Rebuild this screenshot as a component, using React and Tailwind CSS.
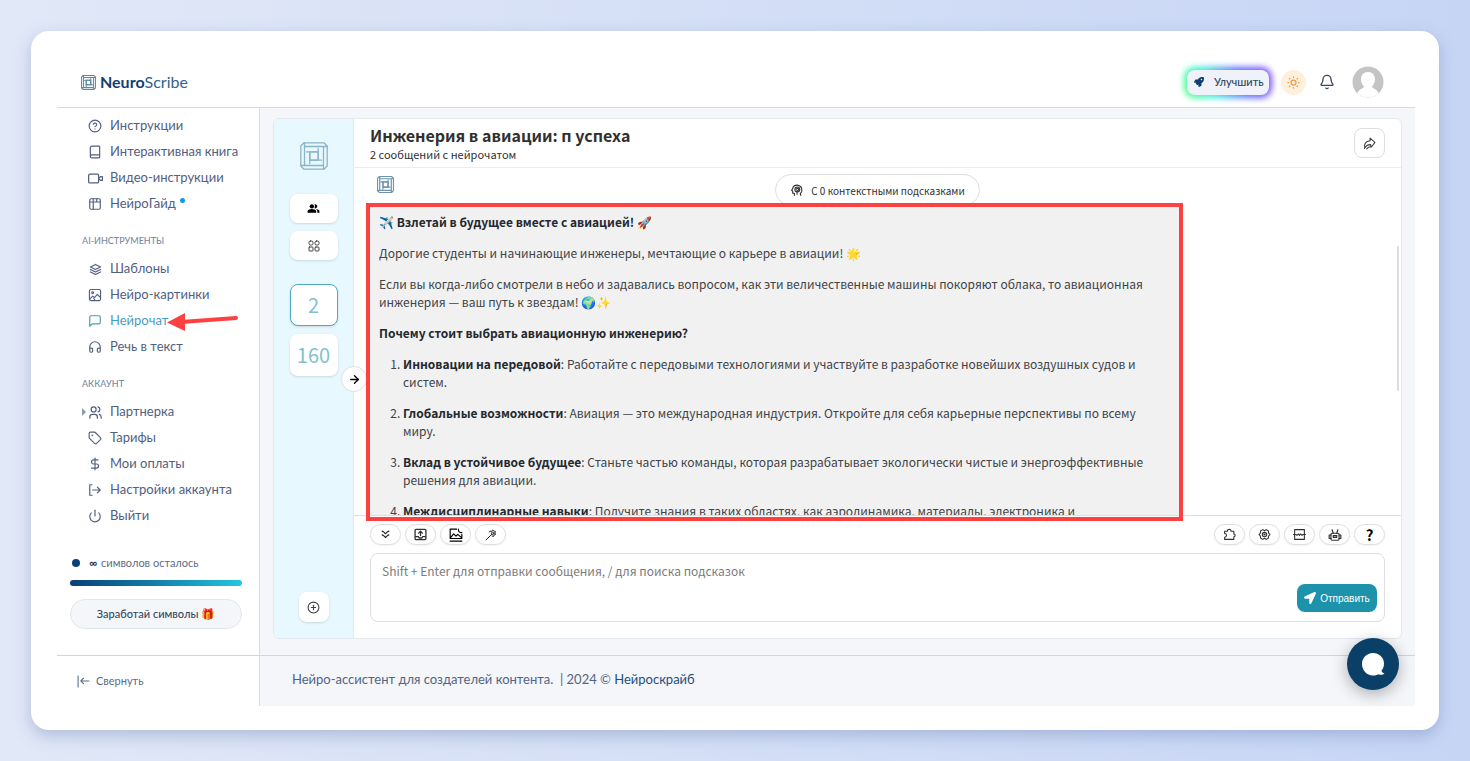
import React from "react";
import { CircleHelp, Book, Headphones, Tag, DollarSign, Power, Bell, CirclePlus, ArrowRight } from "lucide-react";
import { FaRocket, FaLocationArrow } from "react-icons/fa";
import { MdPeopleAlt } from "react-icons/md";
import { TbStack2, TbUsers, TbSun } from "react-icons/tb";

const Svg = ({ size = 14, box = 24, width = 2, className = "", children }) => (
  <svg
    width={size}
    height={size}
    viewBox={`0 0 ${box} ${box}`}
    fill="none"
    stroke="currentColor"
    strokeWidth={width}
    strokeLinecap="round"
    strokeLinejoin="round"
    className={`shrink-0 ${className}`}
    aria-hidden="true"
  >
    {children}
  </svg>
);

const LogoMark = ({ size, className = "", width = 1.3 }) => (
  <Svg size={size} box={28} width={width} className={className}>
    <path d="M4 .8h20l3.200 3.200v20L24 27.200H4L.8 24V4z" />
    <rect x="9.800" y="9.800" width="8.400" height="8.400" />
    {[0, 90, 180, 270].map((r) => (
      <path key={r} transform={`rotate(${r} 14 14)`} d="M4.500 4.500H27M6.500 9.800H18" />
    ))}
  </Svg>
);

const VideoIcon = () => (
  <Svg size={15}>
    <rect x="1" y="5" width="16" height="14" rx="2" />
    <path d="M17 12l3-3h3v6h-3z" />
  </Svg>
);
const TableIcon = () => (
  <Svg>
    <rect x="3" y="3" width="18" height="18" rx="2" />
    <path d="M3 8.500h18M9 3v18M15 3v5" />
  </Svg>
);
const PictureIcon = () => (
  <Svg>
    <rect x="2.500" y="2.500" width="19" height="19" rx="2.500" />
    <circle cx="8" cy="8" r="1.500" />
    <path d="M3 19l5-5 3 2.500 5-5.500 5 5M12 21l-2-3" />
  </Svg>
);
const BubbleIcon = () => (
  <Svg>
    <path d="M3 21V5a2 2 0 0 1 2-2h14a2 2 0 0 1 2 2v10a2 2 0 0 1-2 2H7z" />
  </Svg>
);
const SignOutIcon = () => (
  <Svg>
    <path d="M7 3H3v18h4M8 12h12M16 7l5 5-5 5" />
  </Svg>
);
const CollapseIcon = () => (
  <Svg size={13}>
    <path d="M2 2v20M7 11h15M12 6l-5 5 5 5" />
  </Svg>
);
const GridIcon = () => (
  <Svg size={12} width={2}>
    <rect x="2" y="2" width="8" height="8" rx="3" />
    <rect x="14" y="2" width="8" height="8" rx="3" />
    <rect x="2" y="14" width="8" height="8" rx="1" />
    <rect x="14" y="14" width="8" height="8" rx="2" />
  </Svg>
);
const HeadIcon = () => (
  <Svg size={13}>
    <path d="M8 21v-4H5v-4l-2-1 2-4c1-4 4-6 8-6 5 0 9 4 9 9 0 3-1 5-3 7l1 3" />
    <circle cx="13.500" cy="10" r="4.500" />
    <path d="M13 15v4M11 10l2-2 3 1-1 3-3 1" />
  </Svg>
);
const ShareIcon = () => (
  <Svg size={13}>
    <path d="M13 2l9 8-7 9-1-5c-5 0-9 2-11 7C1 13 5 8 13 7z" />
    <path d="M7 22c2-3 4-4 7-4" />
  </Svg>
);
const DownIcon = () => (
  <Svg size={9} width={3}>
    <path d="M3 3l4 2 5 5 5-5 4-2M3 13l4 2 5 5 5-5 4-2" />
  </Svg>
);
const UploadIcon = () => (
  <Svg size={13} width={2.4}>
    <rect x="2" y="2.500" width="20" height="19" rx="2" />
    <path d="M3 16h5l1.500 2.500h5L16 16h5M12 14V6M8.500 9.500L12 6l3.500 3.500" />
  </Svg>
);
const ImageIcon = () => (
  <Svg size={14} width={2} className="text-black">
    <path d="M13 2H2v16h20v-7M2 22.500h20M3 16l5-6 4 4 3-3 6 5" />
    <path d="M16 2c0 4 2 6 6 6" />
  </Svg>
);
const WandIcon = () => (
  <Svg size={12}>
    <path d="M2 22L14 10M9 6l1-2 3 1 2-3 3 2 3 1-1 3 1 3-3 1-1 3-3-1" />
    <circle cx="15.500" cy="8.500" r="2.500" />
  </Svg>
);
const PuzzleIcon = () => (
  <Svg size={13}>
    <path d="M3 6h5a3.500 3.500 0 0 1 7 0h5v5a2.500 2.500 0 0 1 0 5v5H3v-4a3 3 0 0 0 0-7z" />
  </Svg>
);
const GearIcon = () => (
  <Svg size={13}>
    <path d="M9 3l3 2 3-2 4 2 .5 4L22 12l-2.500 3-.5 4-4 2-3-2-3 2-4-2-.5-4L2 12l2.500-3L5 5z" />
    <circle cx="12" cy="12" r="4" />
    <circle cx="12" cy="12" r="1" />
  </Svg>
);
const BreakIcon = () => (
  <Svg size={13}>
    <path d="M3 9V3h18v6M3 15v6h18v-6M3 3v18M21 3v18" />
    <path d="M1 12h4l2.500 1.500L10 11l2 2.500 2-2.500 2.500 2.500L19 12h4" />
  </Svg>
);
const RobotIcon = () => (
  <Svg size={14}>
    <rect x="5" y="9" width="14" height="12" rx="2" />
    <path d="M9 9L7 3M15 9l2-6M5 12H2v6h3M19 12h3v6h-3M9 13h6v3H9z" />
  </Svg>
);

const guides = [
  { label: "Инструкции", icon: <CircleHelp size={14} /> },
  { label: "Интерактивная книга", icon: <Book size={14} /> },
  { label: "Видео-инструкции", icon: <VideoIcon /> },
  { label: "НейроГайд", icon: <TableIcon />, dot: true },
];
const tools = [
  { label: "Шаблоны", icon: <TbStack2 size={15} /> },
  { label: "Нейро-картинки", icon: <PictureIcon /> },
  { label: "Нейрочат", icon: <BubbleIcon />, active: true },
  { label: "Речь в текст", icon: <Headphones size={14} /> },
];
const account = [
  { label: "Партнерка", icon: <TbUsers size={15} />, caret: true },
  { label: "Тарифы", icon: <Tag size={14} /> },
  { label: "Мои оплаты", icon: <DollarSign size={14} /> },
  { label: "Настройки аккаунта", icon: <SignOutIcon /> },
  { label: "Выйти", icon: <Power size={14} /> },
];

const Pointer = () => (
  <svg className="pointer-events-none absolute left-[110px] top-0 z-10" width="72" height="26" viewBox="0 0 72 26" aria-hidden="true">
    <path d="M14 14L69 10" stroke="#fd4141" strokeWidth="4" strokeLinecap="round" />
    <path d="M0 14.500L18 5v18z" fill="#fd4141" />
  </svg>
);

const NavList = ({ items }) => (
  <ul>
    {items.map((it) => (
      <li key={it.label} className="relative">
        <a
          href="#"
          className={`flex h-[26px] items-center pl-[31px] text-[13px] ${it.active ? "text-[#4a9cbd]" : "text-[#526080]"}`}
        >
          {it.caret && (
            <span className="absolute left-[25px] h-0 w-0 border-y-4 border-l-4 border-y-transparent border-l-[#8d97b3]" />
          )}
          <span className="flex w-[22px] shrink-0 items-center">{it.icon}</span>
          {it.label}
          {it.dot && <span className="mb-2 ml-1 h-[5px] w-[5px] rounded-full bg-[#1296ea]" />}
        </a>
        {it.active && <Pointer />}
      </li>
    ))}
  </ul>
);

const NavHeading = ({ children }) => (
  <h2 className="flex h-[39px] items-center pl-[25px] pt-[9px] text-[9px] font-medium uppercase text-[#7c8aa3]">{children}</h2>
);

const Tool = ({ label, children }) => (
  <button
    type="button"
    aria-label={label}
    className="flex h-[21px] w-[31px] items-center justify-center rounded-full border border-[#dedede] bg-white text-[#303030] shadow-xs"
  >
    {children}
  </button>
);

const points = [
  ["Инновации на передовой", ": Работайте с передовыми технологиями и участвуйте в разработке новейших воздушных судов и систем."],
  ["Глобальные возможности", ": Авиация — это международная индустрия. Откройте для себя карьерные перспективы по всему миру."],
  ["Вклад в устойчивое будущее", ": Станьте частью команды, которая разрабатывает экологически чистые и энергоэффективные решения для авиации."],
  ["Междисциплинарные навыки", ": Получите знания в таких областях, как аэродинамика, материалы, электроника и программирование."],
];

function TopBar() {
  return (
    <header className="flex h-[51px] items-center justify-between border-b border-[#d5dae6] pl-[24px] pr-[31px]">
      <a href="#" className="flex items-center gap-1 text-[16px] text-[#2f628c]">
        <LogoMark size={15} width={2} className="text-[#5d88a4]" />
        <span>
          <b className="font-bold text-[#123f70]">Neuro</b>Scribe
        </span>
      </a>
      <div className="flex items-center gap-3">
        <div className="relative">
          <div className="absolute -inset-[3px] rounded-[11px] bg-[linear-gradient(65deg,#4dff8a_5%,#36f0d8_30%,#5b6cff_65%,#8a4dff)] blur-[3px]" />
          <button type="button" className="relative flex h-[25px] w-[82px] items-center gap-[10px] rounded-lg bg-[#eff2f8] pl-[7px] text-[11px] font-medium text-[#2c4765]">
            <FaRocket size={10} className="text-[#0f3f70]" />
            Улучшить
          </button>
        </div>
        <button type="button" aria-label="Тема" className="flex h-[25px] w-[25px] items-center justify-center rounded-full bg-[#fff0dc] text-[#f09a4a]">
          <TbSun size={15} />
        </button>
        <button type="button" aria-label="Уведомления" className="flex w-[18px] justify-center text-[#39475e]">
          <Bell size={16} />
        </button>
        <button type="button" aria-label="Профиль" className="ml-1">
          <svg width="32" height="32" viewBox="0 0 32 32" aria-hidden="true">
            <circle cx="16" cy="16" r="15.500" fill="#c4c4c4" />
            <path d="M16 6c4.500 0 7 3 7 7.500 0 3-1.500 5.500-3 7 0 2 5 2 6.500 7A15.500 15.500 0 0 1 5.500 27.500c1.500-5 6.500-5 6.500-7-1.500-1.500-3-4-3-7C9 9 11.500 6 16 6z" fill="#fff" />
          </svg>
        </button>
      </div>
    </header>
  );
}

function Sidebar() {
  return (
    <aside className="flex w-[203px] shrink-0 flex-col border-r border-[#d8dce9] bg-white">
      <nav className="flex-1 pt-[5px]">
        <NavList items={guides} />
        <NavHeading>AI-инструменты</NavHeading>
        <NavList items={tools} />
        <NavHeading>Аккаунт</NavHeading>
        <NavList items={account} />
        <div className="pl-[13px] pr-[17px] pt-6">
          <p className="flex h-5 items-center text-[11px] text-[#5d6b86]">
            <span className="ml-[2px] mr-[9px] h-2 w-2 rounded-full bg-[#0a4076]" />
            <b className="mr-1 text-[#303a52]">∞</b>символов осталось
          </p>
          <div className="mt-[7px] h-[6px] rounded-sm bg-gradient-to-r from-[#0a4076] to-[#25c5e0]" />
          <button type="button" className="mt-[13px] h-[30px] w-full rounded-full border border-[#e1e5ee] bg-[#f5f6fa] text-[11px] font-medium text-[#364a63]">
            Заработай символы 🎁
          </button>
        </div>
      </nav>
      <button type="button" className="flex h-[51px] items-center gap-[6px] border-t border-[#d0d4e2] pl-5 text-[11px] text-[#5d6b86]">
        <CollapseIcon />
        Свернуть
      </button>
    </aside>
  );
}

function ChatRail() {
  const tile = "flex w-12 items-center justify-center rounded-lg bg-white shadow-sm";
  return (
    <div className="relative flex w-20 shrink-0 flex-col items-center border-r border-[#dcebf2] bg-[#e7f8ff] pb-4 pt-[23px]">
      <LogoMark size={28} className="text-[#8db3c8]" />
      <button type="button" aria-label="Маски" className={`${tile} mt-6 h-[29px] text-black`}>
        <MdPeopleAlt size={13} />
      </button>
      <button type="button" aria-label="Плагины" className={`${tile} mt-2 h-[29px] text-[#404040]`}>
        <GridIcon />
      </button>
      <button type="button" className={`${tile} mt-6 h-[42px] border border-[#4dabba] text-[20px] text-[#80c2ce]`}>2</button>
      <button type="button" className={`${tile} mt-2 h-[42px] text-[20px] text-[#80c2ce]`}>160</button>
      <button type="button" aria-label="Новый чат" className="mt-auto flex h-[30px] w-[30px] items-center justify-center rounded-lg bg-white text-[#404040] shadow-sm">
        <CirclePlus size={13} />
      </button>
      <button type="button" aria-label="Развернуть" className="absolute -right-[14px] top-[247px] z-10 flex h-[26px] w-[26px] items-center justify-center rounded-full border border-[#e0e0e0] bg-white text-black">
        <ArrowRight size={13} strokeWidth={2.5} />
      </button>
    </div>
  );
}

function Message() {
  return (
    <article className="w-4/5 bg-[#f1f1f1] px-[9px] pt-[7px] text-[12px] leading-[18px] text-[#404348]">
      <div className="flex flex-col gap-[13px]">
        <p className="font-bold text-[#24292f]">✈️ Взлетай в будущее вместе с авиацией! 🚀</p>
        <p>Дорогие студенты и начинающие инженеры, мечтающие о карьере в авиации! 🌟</p>
        <p>
          Если вы когда-либо смотрели в небо и задавались вопросом, как эти величественные машины покоряют облака, то авиационная
          инженерия — ваш путь к звездам! 🌍✨
        </p>
        <p className="font-bold text-[#24292f]">Почему стоит выбрать авиационную инженерию?</p>
        <ol className="flex list-decimal flex-col gap-[13px] pl-6 pr-6">
          {points.map(([head, text]) => (
            <li key={head}>
              <b className="font-bold text-[#24292f]">{head}</b>
              {text}
            </li>
          ))}
        </ol>
      </div>
    </article>
  );
}

function ChatPanel() {
  return (
    <section className="flex h-[521px] overflow-hidden rounded-md border border-[#e4e8ef] bg-white font-['Noto_Sans_CJK_SC','Noto_Sans',sans-serif] text-[#303030]">
      <ChatRail />
      <div className="relative flex min-w-0 flex-1 flex-col">
        <header className="flex h-[49px] shrink-0 items-center justify-between border-b border-[#ececec] px-4">
          <div className="pt-[2px]">
            <h1 className="text-[16px] font-bold leading-5">Инженерия в авиации: п успеха</h1>
            <p className="text-[11px] leading-[18px]">2 сообщений с нейрочатом</p>
          </div>
          <button type="button" aria-label="Поделиться" className="flex h-[30px] w-[31px] items-center justify-center rounded-lg border border-[#dedede] text-[#404040]">
            <ShareIcon />
          </button>
        </header>
        <div className="relative min-h-0 flex-1 overflow-hidden px-4 pt-[6px]">
          <div className="grid h-8 grid-cols-[1fr_auto_1fr]">
            <LogoMark size={17} width={2} className="ml-[7px] mt-[2px] text-[#6d93ad]" />
            <div className="flex h-8 items-center gap-2 rounded-full border border-[#dedede] bg-white px-[14px] text-[10px]">
              <HeadIcon />
              С 0 контекстными подсказками
            </div>
          </div>
          <Message />
          <div className="absolute right-[2px] top-[78px] h-[145px] w-[2px] rounded bg-[#dcdcdc]" />
        </div>
        <footer className="shrink-0 border-t border-[#dedede] px-4 pb-4 pt-2">
          <div className="flex justify-between">
            <div className="flex gap-1">
              <Tool label="Вниз"><DownIcon /></Tool>
              <Tool label="Загрузить"><UploadIcon /></Tool>
              <Tool label="Изображение"><ImageIcon /></Tool>
              <Tool label="Подсказки"><WandIcon /></Tool>
            </div>
            <div className="flex gap-1">
              <Tool label="Плагины"><PuzzleIcon /></Tool>
              <Tool label="Настройки"><GearIcon /></Tool>
              <Tool label="Очистить контекст"><BreakIcon /></Tool>
              <Tool label="Модель"><RobotIcon /></Tool>
              <Tool label="Помощь"><span className="text-[15px] font-bold leading-none text-black">?</span></Tool>
            </div>
          </div>
          <div className="mt-2 flex h-[69px] items-end rounded-lg border border-[#dedede] pb-[9px] pl-[11px] pr-[7px]">
            <textarea
              aria-label="Сообщение"
              placeholder="Shift + Enter для отправки сообщения, / для поиска подсказок"
              className="h-[50px] flex-1 resize-none bg-transparent text-[12px] leading-[18px] outline-none placeholder:text-[#7c7c7c]"
            />
            <button type="button" className="flex h-7 w-20 items-center justify-center gap-1 rounded-lg bg-[#1d93ab] font-['Liberation_Sans',sans-serif] text-[10px] text-white">
              <FaLocationArrow size={12} />
              Отправить
            </button>
          </div>
        </footer>
        <div className="pointer-events-none absolute left-3 top-[84px] z-20 h-[318px] w-[817px] border-4 border-[#fd4141]" />
      </div>
    </section>
  );
}

export default function App() {
  return (
    <div className="flex min-h-screen bg-gradient-to-r from-[#e1e8f7] to-[#c7d5f5] p-[31px] font-[Lato,'Open_Sans',sans-serif]">
      <div className="flex min-w-0 flex-1 flex-col rounded-[18px] bg-white pb-6 pl-[26px] pr-6 pt-[26px] shadow-[0_6px_16px_rgba(90,115,170,0.35)]">
        <TopBar />
        <div className="flex flex-1">
          <Sidebar />
          <main className="relative flex min-w-0 flex-1 flex-col bg-[#f5f6fa]">
            <div className="flex-1 px-[13px] pt-[10px]">
              <ChatPanel />
            </div>
            <footer className="flex h-[51px] items-center border-t border-[#d0d4e2] pb-[2px] pl-8 text-[13px] text-[#526484]">
              <p>
                Нейро-ассистент для создателей контента. &nbsp;| 2024 © <a href="#" className="text-[#1f4f7a]">Нейроскрайб</a>
              </p>
            </footer>
            <button
              type="button"
              aria-label="Открыть чат"
              className="absolute bottom-4 right-4 flex h-[52px] w-[52px] items-center justify-center rounded-full bg-[#0a4068] shadow-[0_4px_16px_rgba(0,0,0,0.3)]"
            >
              <svg width="24" height="24" viewBox="0 0 24 24" fill="#fff" aria-hidden="true">
                <path d="M12 1c6 0 11 4.500 11 10.500 0 3-1 5.500-2.500 7.200.3 1.300 1.300 2.200 3 2.800-1.500 1.500-4 1.700-6 .7-1.600.8-3.500 1.300-5.500 1.300C5.500 23.500 1 18 1 12S5.500 1 12 1z" />
              </svg>
            </button>
          </main>
        </div>
      </div>
    </div>
  );
}
